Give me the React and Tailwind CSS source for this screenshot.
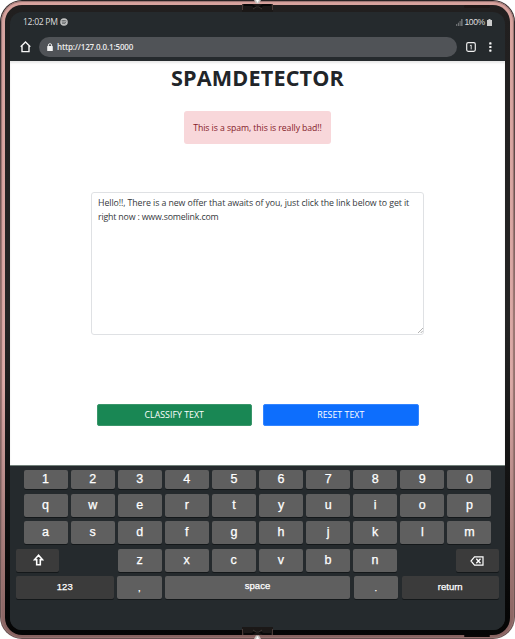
import React from 'react';

const numberRow = ['1', '2', '3', '4', '5', '6', '7', '8', '9', '0'];
const letterRows = [
  ['q', 'w', 'e', 'r', 't', 'y', 'u', 'i', 'o', 'p'],
  ['a', 's', 'd', 'f', 'g', 'h', 'j', 'k', 'l', 'm'],
];

function Key({ children, className = '' }) {
  return (
    <div className={`flex items-center justify-center rounded-[2px] shadow-[0_1px_0_#14181a] text-white ${className}`}>
      {children}
    </div>
  );
}

function KeyRow({ keys, className }) {
  return (
    <div className={`ml-[13.5px] grid w-[468px] grid-cols-10 gap-x-[3px] ${className}`}>
      {keys.map((k) => (
        <Key key={k} className="bg-[#5f5f5f] text-[12.5px] leading-none">{k}</Key>
      ))}
    </div>
  );
}

function Hinge({ className }) {
  return (
    <svg className={`absolute left-[241px] ${className}`} width="33" height="12" viewBox="0 0 33 12">
      <rect x="1" y="4" width="31" height="8" fill="#1b1817" />
      <path d="M1.5 4v6M31.5 4v6" stroke="#4a3a37" />
      <path d="M3 5h8l3 2h5l3-2h8" fill="none" stroke="#080808" strokeWidth="2" />
      <path d="M12 9l3-2h3l3 2" fill="none" stroke="#3e3835" />
      <path d="M13 0h7l-2 3.5h-3z" fill="#c9c5c2" />
      <path d="M15 0h3l-1.5 3z" fill="#fff" />
    </svg>
  );
}

function StatusBar() {
  return (
    <div className="flex h-[20px] items-center pl-[13px] pr-[13px] font-['Open_Sans',sans-serif] text-[8.6px] leading-none text-[#dedede]">
      <span className="w-[36.5px] whitespace-nowrap tracking-[-0.3px]">12:02 PM</span>
      <svg width="8" height="8" viewBox="0 0 8 8">
        <circle cx="4" cy="4" r="3.8" fill="#bfc0c0" />
        <path d="M1.6 2.8q2.6-.9 4.9.3M1.9 4.2q2.2-.6 4.1.4M2.2 5.5q1.8-.4 3.2.3" fill="none" stroke="#3b4043" strokeWidth=".65" />
      </svg>
      <svg className="ml-auto" width="7" height="7" viewBox="0 0 7 7">
        <path d="M.7 5v2M2.4 3.7V7M4.1 2v5" stroke="#8b8e90" strokeWidth=".8" />
        <path d="M5.9 0v7" stroke="#a8aaab" strokeWidth=".9" />
      </svg>
      <span className="ml-[1.5px] w-[22.5px] whitespace-nowrap font-['Liberation_Sans',sans-serif] tracking-[-0.45px]">100%</span>
      <svg width="5" height="7" viewBox="0 0 5 7">
        <path d="M1.5 0h2v1H5v6H0V1h1.5z" fill="#cbcccc" />
      </svg>
    </div>
  );
}

function AddressBar() {
  return (
    <div className="flex h-[29px] items-center pl-[10px]">
      <svg width="11" height="12" viewBox="0 0 11 12">
        <path d="M.7 5.8L5.5 1l4.8 4.8M2 5v5.6h7V5" fill="none" stroke="#f5f5f5" strokeWidth="1.4" />
      </svg>
      <div className="ml-[8px] flex h-[20px] w-[418px] items-center rounded-full bg-[#505357] pl-[7.5px]">
        <svg width="6" height="8" viewBox="0 0 6 8">
          <rect x=".2" y="3" width="5.6" height="5" rx=".6" fill="#f3f3f3" />
          <path d="M1.4 3.2V2q0-1.3 1.6-1.3T4.6 2v1.2" fill="none" stroke="#f3f3f3" strokeWidth=".9" />
        </svg>
        <span className="ml-[4.5px] whitespace-nowrap font-['Open_Sans',sans-serif] text-[8px] font-semibold leading-none tracking-[-0.15px] text-[#ececec]">http://127.0.0.1:5000</span>
      </div>
      <svg className="ml-[9px]" width="10" height="10" viewBox="0 0 10 10">
        <rect x=".7" y=".7" width="8.6" height="8.6" rx="1.5" fill="none" stroke="#efefef" strokeWidth="1.2" />
        <path d="M3.9 3.7L5.2 3v4.4" fill="none" stroke="#efefef" strokeWidth=".9" />
      </svg>
      <svg className="ml-[13px]" width="3" height="10" viewBox="0 0 3 10">
        <rect x=".2" y=".3" width="2.3" height="2.2" rx=".6" fill="#f5f5f5" />
        <rect x=".2" y="3.9" width="2.3" height="2.2" rx=".6" fill="#f5f5f5" />
        <rect x=".2" y="7.5" width="2.3" height="2.2" rx=".6" fill="#f5f5f5" />
      </svg>
    </div>
  );
}

function DetectorPage() {
  return (
    <main className="flex h-[404px] flex-col items-center bg-white font-['Open_Sans',sans-serif] shadow-[inset_0_2px_2px_#e9e9e9]">
      <h1 className="mt-[5px] h-[24px] whitespace-nowrap text-[21.6px] font-bold leading-[24px] tracking-[0.15px] text-[#212529]">SPAMDETECTOR</h1>
      <div className="mt-[21px] flex h-[33px] w-[147px] items-center justify-center whitespace-nowrap rounded-[3px] bg-[#f8d7da] pt-[2px] text-[8.7px] tracking-[-0.07px] text-[#842029]">
        This is a spam, this is really bad!!
      </div>
      <div className="relative mt-[48px] h-[143px] w-[333px] rounded-[3px] border border-[#dfe1e4] px-[6px] pt-[3px] text-[8.8px] leading-[14px] text-[#35393d]">
        <p className="whitespace-nowrap tracking-[-0.09px]">Hello!!, There is a new offer that awaits of you, just click the link below to get it</p>
        <p className="whitespace-nowrap tracking-[-0.18px]">right now : www.somelink.com</p>
        <svg className="absolute bottom-[1px] right-[0px]" width="5" height="5" viewBox="0 0 5 5">
          <path d="M0 5L5 0M2.7 5L5 2.7" stroke="#777" strokeWidth=".8" strokeDasharray="1 .5" />
        </svg>
      </div>
      <div className="mt-[69px] flex gap-[11px] text-[8.8px] leading-none tracking-[0.02px] text-white">
        <button className="h-[22px] w-[155.5px] rounded-[2px] border border-[#3a966a] bg-[#198754] pt-[1px]">CLASSIFY TEXT</button>
        <button className="h-[22px] w-[155.5px] rounded-[2px] border border-[#3485ff] bg-[#0d6efd] pt-[1px]">RESET TEXT</button>
      </div>
    </main>
  );
}

function Keyboard() {
  return (
    <div className="h-[165px] border-t border-[#71807a] bg-[#252a2d] pt-[4px] font-['Liberation_Sans',sans-serif] [-webkit-text-stroke:0.25px_white]">
      <KeyRow keys={numberRow} className="h-[19px]" />
      <KeyRow keys={letterRows[0]} className="mt-[4.5px] h-[23px]" />
      <KeyRow keys={letterRows[1]} className="mt-[4.5px] h-[23px]" />
      <div className="mt-[4.5px] flex h-[23px] pl-[6px] text-[12.5px] leading-none">
        <Key className="w-[43px] bg-[#3b3b3b]">
          <svg className="ml-[2px]" width="11" height="12" viewBox="0 0 11 12">
            <path d="M5.5 1.3L1.5 5.7h2.2v5.1h3.6V5.7h2.2z" fill="none" stroke="#fff" strokeWidth="1.6" />
          </svg>
        </Key>
        <div className="ml-[58.5px] flex gap-[3px]">
          {['z', 'x', 'c', 'v', 'b', 'n'].map((k) => (
            <Key key={k} className="w-[44.1px] bg-[#5f5f5f]">{k}</Key>
          ))}
        </div>
        <Key className="ml-[58.5px] w-[43px] bg-[#3b3b3b]">
          <svg width="14" height="10" viewBox="0 0 14 10" className="mt-[2px]">
            <path d="M4.5.8H13v8.4H4.5L1 5z" fill="none" stroke="#fff" strokeWidth="1.2" />
            <path d="M6.3 2.8l4.2 4.4m0-4.4L6.3 7.2" stroke="#fff" strokeWidth="1.3" />
          </svg>
        </Key>
      </div>
      <div className="mt-[4.5px] flex h-[23px] gap-[3.5px] pl-[6px] text-[9.5px] leading-none">
        <Key className="w-[97.5px] bg-[#3b3b3b] pb-[2px]">123</Key>
        <Key className="w-[44.5px] bg-[#5f5f5f] pt-[1px]">,</Key>
        <Key className="w-[185px] bg-[#5f5f5f] pb-[3px]">space</Key>
        <Key className="w-[44.5px] bg-[#5f5f5f] pt-[1px]">.</Key>
        <Key className="w-[97.5px] bg-[#3b3b3b] pb-[1px]">return</Key>
      </div>
    </div>
  );
}

export default function App() {
  return (
    <div className="relative h-[639px] w-[515px] overflow-hidden bg-white">
      <div className="h-full rounded-[22px] bg-linear-to-b from-[#292324] via-[#9b7974] to-[#65504f] p-px">
        <div className="h-full rounded-[21px] bg-linear-to-b from-[#d8a39e] via-[#dba9a6] via-60% to-[#86615f] px-[4px] pb-[3px] pt-[4px] shadow-[inset_0_0_1px_1px_#987371]">
          <div className="h-full rounded-[17px] bg-linear-to-b from-[#211f1f] via-[#242424] to-[#050505] px-[5px] pb-[5px] pt-[7px]">
            <div className="h-full overflow-hidden rounded-[12px] bg-[#252a2d]">
              <StatusBar />
              <AddressBar />
              <DetectorPage />
              <Keyboard />
            </div>
          </div>
        </div>
      </div>
      <Hinge className="top-0" />
      <Hinge className="bottom-0 -scale-y-100" />
      <div className="absolute left-[464px] top-[5px] h-[3px] w-[26px] rounded-full bg-[#1d1716]" />
      <div className="absolute bottom-[2px] left-[464px] h-[2px] w-[26px] rounded-full bg-[#090606]" />
    </div>
  );
}
